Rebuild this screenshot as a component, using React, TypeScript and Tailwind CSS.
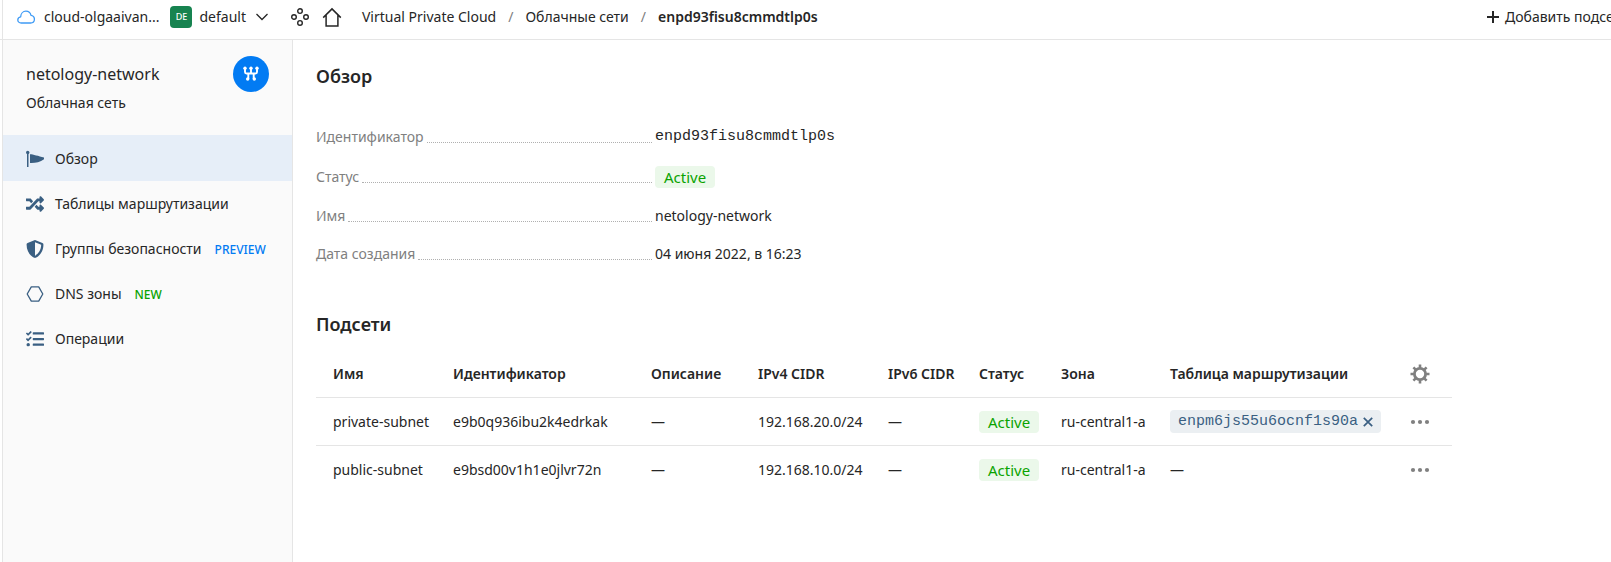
import type { ReactNode } from 'react';
import { FaRandom, FaTasks, FaShieldAlt } from 'react-icons/fa';

function CloudIcon() {
  return (
    <svg className="h-[18px] w-[18px] shrink-0 text-[#3f9bf5]" viewBox="0 0 18 18" fill="none" stroke="currentColor" strokeWidth="1.300" strokeLinejoin="round" aria-hidden="true">
      <path d="M4.200 15C2.200 15 .8 13.700.8 11.900c0-1.600 1.200-2.900 2.900-3.100C3.800 5.700 5.900 3.200 8.900 3.200c2.600 0 4.600 1.800 5.100 4.200 2.100.3 3.400 1.900 3.400 3.800 0 2.200-1.600 3.800-3.800 3.800z" />
    </svg>
  );
}

function ServicesIcon() {
  return (
    <svg className="h-[18px] w-[18px]" viewBox="0 0 18 18" fill="none" stroke="currentColor" strokeWidth="1.400" aria-hidden="true">
      <circle cx="9" cy="3.100" r="2.300" />
      <circle cx="3" cy="9" r="2.300" />
      <circle cx="15" cy="9" r="2.300" />
      <circle cx="9" cy="14.900" r="2.300" />
    </svg>
  );
}

function HomeIcon() {
  return (
    <svg className="h-5 w-5" viewBox="0 0 20 20" fill="none" stroke="currentColor" strokeWidth="1.500" aria-hidden="true">
      <path d="M1.200 10.600 10 1.900l8.800 8.700M4.100 8v11h11.800V8" />
    </svg>
  );
}

function NetworkIcon() {
  return (
    <svg className="h-4 w-4" viewBox="0 0 16 16" fill="none" stroke="currentColor" strokeWidth="1.900" aria-hidden="true">
      <path d="M2 2.500v3.500q0 1.500 1.500 1.500h9q1.500 0 1.500-1.500V2.500M8 2.500v5M5.300 7.500V13M10.700 7.500V13" />
      <g fill="currentColor" stroke="none">
        <circle cx="2" cy="2.200" r="1.700" />
        <circle cx="8" cy="2.200" r="1.700" />
        <circle cx="14" cy="2.200" r="1.700" />
        <circle cx="4.700" cy="13" r="1.700" />
        <circle cx="11.300" cy="13" r="1.700" />
      </g>
    </svg>
  );
}

function FlagIcon() {
  return (
    <svg className="h-[18px] w-[18px]" viewBox="0 0 18 18" fill="currentColor" aria-hidden="true">
      <circle cx="1.700" cy="2.500" r="1.700" />
      <path d="M1 2.500h1.500V17H1zM4 4.300c3 .1 8.500 1.800 14 3.300v1.700c-4 3-9 3.900-14 3.700z" />
    </svg>
  );
}

function HexagonIcon() {
  return (
    <svg className="h-[18px] w-[18px]" viewBox="0 0 18 18" fill="none" stroke="currentColor" strokeWidth="1.300" strokeLinejoin="round" aria-hidden="true">
      <path d="M5.300 1.900h7.400L16.800 9l-4.100 7.100H5.300L1.200 9z" />
    </svg>
  );
}

function GearIcon() {
  return (
    <svg className="h-5 w-5" viewBox="0 0 20 20" fill="none" stroke="currentColor" aria-hidden="true">
      <circle cx="10" cy="10" r="5.600" strokeWidth="2.800" />
      <path strokeWidth="2.600" d="M10 .5v4M10 15.500v4M.5 10h4M15.500 10h4M3.400 3.400l2.800 2.800M13.800 13.800l2.800 2.800M3.400 16.600l2.800-2.800M13.800 6.200l2.800-2.800" />
    </svg>
  );
}

function DotsIcon() {
  return (
    <svg className="h-5 w-5" viewBox="0 0 20 20" fill="currentColor" aria-hidden="true">
      <circle cx="3" cy="10" r="2.100" />
      <circle cx="10" cy="10" r="2.100" />
      <circle cx="17" cy="10" r="2.100" />
    </svg>
  );
}

function Status() {
  return <span className="block w-fit rounded-[4px] bg-[#ebf8ea] px-[9px] text-[15px] leading-[22px] text-[#0aa300]">Active</span>;
}

type NavItem = { label: string; icon: ReactNode; active?: boolean; tag?: ReactNode };

const navItems: NavItem[] = [
  { label: 'Обзор', icon: <FlagIcon />, active: true },
  { label: 'Таблицы маршрутизации', icon: <FaRandom className="h-[18px] w-[18px]" /> },
  { label: 'Группы безопасности', icon: <FaShieldAlt className="h-[18px] w-[18px]" />, tag: <span className="text-xs font-medium text-[#027bf3]">PREVIEW</span> },
  { label: 'DNS зоны', icon: <HexagonIcon />, tag: <span className="text-xs font-medium text-[#0aa300]">NEW</span> },
  { label: 'Операции', icon: <FaTasks className="h-[18px] w-[18px]" /> },
];

const details: { label: string; value: ReactNode }[] = [
  { label: 'Идентификатор', value: <span className="block font-['Liberation_Mono',monospace] text-[15px] leading-[22px]">enpd93fisu8cmmdtlp0s</span> },
  { label: 'Статус', value: <Status /> },
  { label: 'Имя', value: 'netology-network' },
  { label: 'Дата создания', value: '04 июня 2022, в 16:23' },
];

const subnets = [
  { name: 'private-subnet', id: 'e9b0q936ibu2k4edrkak', cidr: '192.168.20.0/24', route: 'enpm6js55u6ocnf1s90a' },
  { name: 'public-subnet', id: 'e9bsd00v1h1e0jlvr72n', cidr: '192.168.10.0/24', route: '' },
];

const headings = ['Идентификатор', 'Описание', 'IPv4 CIDR', 'IPv6 CIDR', 'Статус', 'Зона', 'Таблица маршрутизации'];

export default function App() {
  return (
    <div className="flex min-h-screen flex-col overflow-hidden bg-white font-['Noto_Sans',sans-serif] text-sm leading-5 whitespace-nowrap text-[#262626]">
      <header className="flex h-10 items-stretch border-b border-[#e5e5e5]">
        <div className="ml-0.5 flex min-w-0 flex-1 items-center border-l border-[#e5e5e5] pb-[6px] pl-[14px]">
          <button type="button" className="flex items-center gap-[9px]">
            <CloudIcon />
            cloud-olgaaivan...
          </button>
          <button type="button" className="ml-[11px] flex items-center gap-[7px]">
            <span className="flex h-[22px] w-[22px] items-center justify-center rounded-[4px] bg-[#178350] text-[9px] font-medium text-white">DE</span>
            default
            <svg className="ml-[3px] h-3 w-3" viewBox="0 0 12 12" fill="none" stroke="currentColor" strokeWidth="1.300" aria-hidden="true">
              <path d="m.5 3 5.500 5.500L11.500 3" />
            </svg>
          </button>
          <button type="button" aria-label="Сервисы" className="ml-[23px]"><ServicesIcon /></button>
          <a href="#home" aria-label="Главная" className="ml-[13px]"><HomeIcon /></a>
          <nav className="ml-5 flex items-center gap-3">
            <a href="#vpc">Virtual Private Cloud</a>
            <span className="text-[#808080]">/</span>
            <a href="#networks">Облачные сети</a>
            <span className="text-[#808080]">/</span>
            <span className="font-semibold">enpd93fisu8cmmdtlp0s</span>
          </nav>
        </div>
        <div className="w-[124px] shrink-0 overflow-hidden">
          <button type="button" className="flex h-[33px] items-center gap-[6px]">
            <svg className="h-3 w-3 shrink-0" viewBox="0 0 12 12" stroke="currentColor" strokeWidth="2" aria-hidden="true">
              <path d="M6 0v12M0 6h12" />
            </svg>
            Добавить подсеть
          </button>
        </div>
      </header>

      <div className="flex flex-1">
        <aside className="ml-0.5 w-[291px] shrink-0 border-x border-[#e5e5e5] bg-[#fafafa]">
          <div className="flex h-[95px] items-start justify-between pt-4 pr-[23px] pl-[23px]">
            <div className="pt-2">
              <div className="text-base leading-5">netology-network</div>
              <div className="mt-[9px]">Облачная сеть</div>
            </div>
            <span className="flex h-9 w-9 items-center justify-center rounded-full bg-[#027bf3] text-white"><NetworkIcon /></span>
          </div>
          <nav>
            {navItems.map((item) => (
              <a key={item.label} href="#section" className={item.active ? 'flex h-[46px] items-center gap-[11px] bg-[#e6eef8] pt-px pl-[23px]' : 'flex h-[45px] items-center gap-[11px] pt-px pl-[23px]'}>
                <span className="text-[#3a5f82]">{item.icon}</span>
                <span className="flex items-baseline gap-[13px]">
                  {item.label}
                  {item.tag}
                </span>
              </a>
            ))}
          </nav>
        </aside>

        <main className="min-w-0 flex-1 pt-6 pr-8 pl-[23px]">
          <h1 className="text-lg leading-6 font-semibold">Обзор</h1>
          <dl className="mt-[38px] flex flex-col gap-[18px]">
            {details.map((item) => (
              <div key={item.label} className="flex items-center">
                <dt className="flex w-[339px] items-start gap-[3px] pr-[3px] text-[#808080]">
                  {item.label}
                  <span className="h-4 flex-1 border-b border-dotted border-[#b0b0b0]" />
                </dt>
                <dd>{item.value}</dd>
              </div>
            ))}
          </dl>
          <h2 className="mt-12 text-lg leading-6 font-semibold">Подсети</h2>
          <table className="mt-[13px] w-full max-w-[1136px] table-fixed border-collapse text-left [&_td]:pt-px [&_th]:pt-0.5">
            <colgroup>
              <col className="w-[126px]" />
              <col className="w-[198px]" />
              <col className="w-[107px]" />
              <col className="w-[130px]" />
              <col className="w-[91px]" />
              <col className="w-[82px]" />
              <col className="w-[109px]" />
              <col className="w-[232px]" />
              <col className="w-[61px]" />
            </colgroup>
            <thead>
              <tr className="h-12 border-b border-[#e5e5e5]">
                <th className="pl-[17px] font-semibold">Имя</th>
                {headings.map((heading) => (
                  <th key={heading} className="pl-[11px] font-semibold">{heading}</th>
                ))}
                <th className="pl-[19px] text-[#808080]">
                  <button type="button" aria-label="Настройки таблицы" className="block"><GearIcon /></button>
                </th>
              </tr>
            </thead>
            <tbody>
              {subnets.map((subnet) => (
                <tr key={subnet.name} className="h-12 border-b border-[#e5e5e5] last:border-b-0">
                  <td className="pl-[17px]">{subnet.name}</td>
                  <td className="pl-[11px]">{subnet.id}</td>
                  <td className="pl-[11px]">—</td>
                  <td className="pl-[11px]">{subnet.cidr}</td>
                  <td className="pl-[11px]">—</td>
                  <td className="pl-[11px]"><Status /></td>
                  <td className="pl-[11px]">ru-central1-a</td>
                  <td className="pl-[11px]">
                    {subnet.route ? (
                      <span className="flex h-[23px] w-fit items-center gap-[5px] rounded-[4px] bg-[#ebeff2] px-2 font-['Liberation_Mono',monospace] text-[15px] text-[#3a5f82]">
                        {subnet.route}
                        <button type="button" aria-label="Отвязать таблицу">
                          <svg className="h-[10px] w-[10px]" viewBox="0 0 10 10" stroke="currentColor" strokeWidth="1.700" aria-hidden="true">
                            <path d="m.8.8 8.400 8.400M9.200.8.800 9.200" />
                          </svg>
                        </button>
                      </span>
                    ) : '—'}
                  </td>
                  <td className="pl-[19px] text-[#808080]">
                    <button type="button" aria-label="Действия" className="block"><DotsIcon /></button>
                  </td>
                </tr>
              ))}
            </tbody>
          </table>
        </main>
      </div>
    </div>
  );
}
